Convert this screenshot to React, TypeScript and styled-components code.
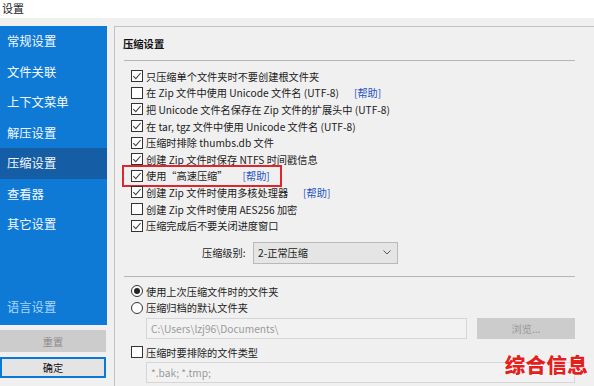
import React from 'react';
import styled, {createGlobalStyle} from 'styled-components';

const GlobalStyle = createGlobalStyle`
  html, body {
    margin: 0;
    padding: 0;
  }
  body {
    width: 594px;
    height: 386px;
    overflow: hidden;
    background: #f0f0f0;
    font-family: "Noto Sans CJK SC", "Liberation Sans", sans-serif;
    color: #1b1b1b;
  }
`;

const Window = styled.div`
  position: relative;
  display: flex;
  flex-direction: column;
  width: 594px;
  height: 386px;
  overflow: hidden;
`;

const TitleBar = styled.div`
  box-sizing: border-box;
  height: 18px;
  padding: 2px 0 0 2px;
  background: #ffffff;
`;

const Title = styled.span`
  display: block;
  font-size: 11px;
  line-height: 13px;
  color: #222;
`;

const Body = styled.div`
  display: flex;
  flex: 1;
  padding-top: 8px;
  min-height: 0;
`;

const Sidebar = styled.div`
  display: flex;
  flex-direction: column;
  width: 107px;
  flex-shrink: 0;
`;

const Nav = styled.div`
  display: flex;
  flex-direction: column;
  height: 299px;
  background: #0f7ad6;
`;

const NavItem = styled.div<{$active?: boolean}>`
  display: flex;
  align-items: center;
  height: 30.5px;
  padding-left: 7px;
  font-size: 12.3px;
  color: #f4f9ff;
  background: ${p => (p.$active ? '#155da4' : 'transparent')};
`;

const LangItem = styled(NavItem)`
  margin-top: auto;
  margin-bottom: 3px;
  color: #a8d6ff;
`;

const SideButton = styled.div<{$primary?: boolean}>`
  display: flex;
  align-items: center;
  justify-content: center;
  box-sizing: border-box;
  width: 106px;
  margin-top: 5px;
  height: ${p => (p.$primary ? '21px' : '22px')};
  font-size: 10.2px;
  color: ${p => (p.$primary ? '#111' : '#8c8c8c')};
  background: ${p => (p.$primary ? '#e4e4e4' : '#cccccc')};
  border: ${p => (p.$primary ? '2px solid #0a78d4' : '1px solid #cccccc')};
`;

const Panel = styled.div`
  flex: 1;
  margin-left: 7px;
  padding: 9px 22px 0 8px;
  border-top: 1px solid #c2c2c2;
  border-left: 1px solid #c2c2c2;
  font-size: 10.2px;
`;

const Heading = styled.div`
  height: 16px;
  line-height: 16px;
  font-size: 10.3px;
  font-weight: 700;
  color: #111;
`;

const Divider = styled.div<{$top: number}>`
  height: 1px;
  margin: ${p => p.$top}px 0 0 1px;
  background: #b5b5b5;
`;

const List = styled.div<{$top: number}>`
  display: flex;
  flex-direction: column;
  margin-top: ${p => p.$top}px;
`;

const Row = styled.label<{$h?: number}>`
  display: flex;
  align-items: center;
  gap: 3px;
  height: ${p => p.$h ?? 16.6}px;
  margin-left: 8px;
  white-space: nowrap;
  position: relative;
`;

const Help = styled.span`
  margin-left: 12px;
  color: #2450c4;
`;

const Highlight = styled.div`
  position: absolute;
  left: -9px;
  top: -3px;
  width: 160px;
  height: 22px;
  box-sizing: border-box;
  border: 2px solid #e0262c;
  pointer-events: none;
`;

const LevelRow = styled.div`
  display: flex;
  align-items: center;
  margin-top: 8px;
  height: 22px;
`;

const LevelLabel = styled.span`
  margin-left: 79px;
  width: 51px;
`;

const Select = styled.div`
  display: flex;
  align-items: center;
  justify-content: space-between;
  box-sizing: border-box;
  width: 145px;
  height: 22px;
  padding: 0 6px 0 4px;
  background: #e5e5e5;
  border: 1px solid #b9b9b9;
`;

const FieldRow = styled.div<{$top: number}>`
  display: flex;
  gap: 10px;
  margin: ${p => p.$top}px 0 0 23px;
`;

const Field = styled.div<{$w: number}>`
  display: flex;
  align-items: center;
  box-sizing: border-box;
  width: ${p => p.$w}px;
  height: 21px;
  padding-left: 4px;
  background: #f2f2f2;
  border: 1px solid #d6d6d6;
  color: #9a9a9a;
`;

const BrowseButton = styled.div`
  display: flex;
  align-items: center;
  justify-content: center;
  width: 98px;
  height: 21px;
  background: #cccccc;
  color: #9a9a9a;
`;

const Watermark = styled.div`
  position: absolute;
  right: 6px;
  bottom: 7px;
  font-size: 20.5px;
  font-weight: 900;
  letter-spacing: 0.3px;
  color: #e3201c;
  text-shadow: 0 0 2px #fff, 0 0 2px #fff;
`;

function CheckBox({checked}: {checked?: boolean}) {
  return (
    <svg width="12" height="12" viewBox="0 0 12 12" style={{flexShrink: 0}}>
      <rect x="0.5" y="0.5" width="11" height="11" fill="#fff" stroke="#333" />
      {checked && <path d="M2.3 6.2 L4.8 8.7 L9.6 3" fill="none" stroke="#444" strokeWidth="1.1" />}
    </svg>
  );
}

function Radio({checked}: {checked?: boolean}) {
  return (
    <svg width="12" height="12" viewBox="0 0 12 12" style={{flexShrink: 0}}>
      <circle cx="6" cy="6" r="5.5" fill="#fff" stroke="#333" />
      {checked && <circle cx="6" cy="6" r="3" fill="#222" />}
    </svg>
  );
}

const options: {text: string; checked: boolean; help?: boolean; mark?: boolean}[] = [
  {text: '只压缩单个文件夹时不要创建根文件夹', checked: true},
  {text: '在 Zip 文件中使用 Unicode 文件名 (UTF-8)', checked: false, help: true},
  {text: '把 Unicode 文件名保存在 Zip 文件的扩展头中 (UTF-8)', checked: true},
  {text: '在 tar, tgz 文件中使用 Unicode 文件名 (UTF-8)', checked: true},
  {text: '压缩时排除 thumbs.db 文件', checked: true},
  {text: '创建 Zip 文件时保存 NTFS 时间戳信息', checked: true},
  {text: '使用“高速压缩”', checked: true, help: true, mark: true},
  {text: '创建 Zip 文件时使用多核处理器', checked: true, help: true},
  {text: '创建 Zip 文件时使用 AES256 加密', checked: false},
  {text: '压缩完成后不要关闭进度窗口', checked: true},
];

const navItems = ['常规设置', '文件关联', '上下文菜单', '解压设置', '压缩设置', '查看器', '其它设置'];

export default function App() {
  return (
    <Window>
      <GlobalStyle />
      <TitleBar>
        <Title>设置</Title>
      </TitleBar>
      <Body>
        <Sidebar>
          <Nav>
            {navItems.map(item => (
              <NavItem key={item} $active={item === '压缩设置'}>
                {item}
              </NavItem>
            ))}
            <LangItem>语言设置</LangItem>
          </Nav>
          <SideButton>重置</SideButton>
          <SideButton $primary>确定</SideButton>
        </Sidebar>
        <Panel>
          <Heading>压缩设置</Heading>
          <Divider $top={8} />
          <List $top={7}>
            {options.map(o => (
              <Row key={o.text}>
                <CheckBox checked={o.checked} />
                <span>{o.text}</span>
                {o.help && <Help>[帮助]</Help>}
                {o.mark && <Highlight />}
              </Row>
            ))}
          </List>
          <LevelRow>
            <LevelLabel>压缩级别:</LevelLabel>
            <Select>
              <span>2-正常压缩</span>
              <svg width="8" height="5" viewBox="0 0 8 5">
                <path d="M0.5 0.5 L4 4 L7.5 0.5" fill="none" stroke="#555" strokeWidth="1" />
              </svg>
            </Select>
          </LevelRow>
          <Divider $top={12} />
          <List $top={6}>
            <Row $h={16.5}>
              <Radio checked />
              <span>使用上次压缩文件时的文件夹</span>
            </Row>
            <Row $h={16.5}>
              <Radio />
              <span>压缩归档的默认文件夹</span>
            </Row>
          </List>
          <FieldRow $top={2}>
            <Field $w={321}>C:\Users\lzj96\Documents\</Field>
            <BrowseButton>浏览...</BrowseButton>
          </FieldRow>
          <List $top={5}>
            <Row>
              <CheckBox />
              <span>压缩时要排除的文件类型</span>
            </Row>
          </List>
          <FieldRow $top={1}>
            <Field $w={429}>*.bak; *.tmp;</Field>
          </FieldRow>
        </Panel>
      </Body>
      <Watermark>综合信息</Watermark>
    </Window>
  );
}
